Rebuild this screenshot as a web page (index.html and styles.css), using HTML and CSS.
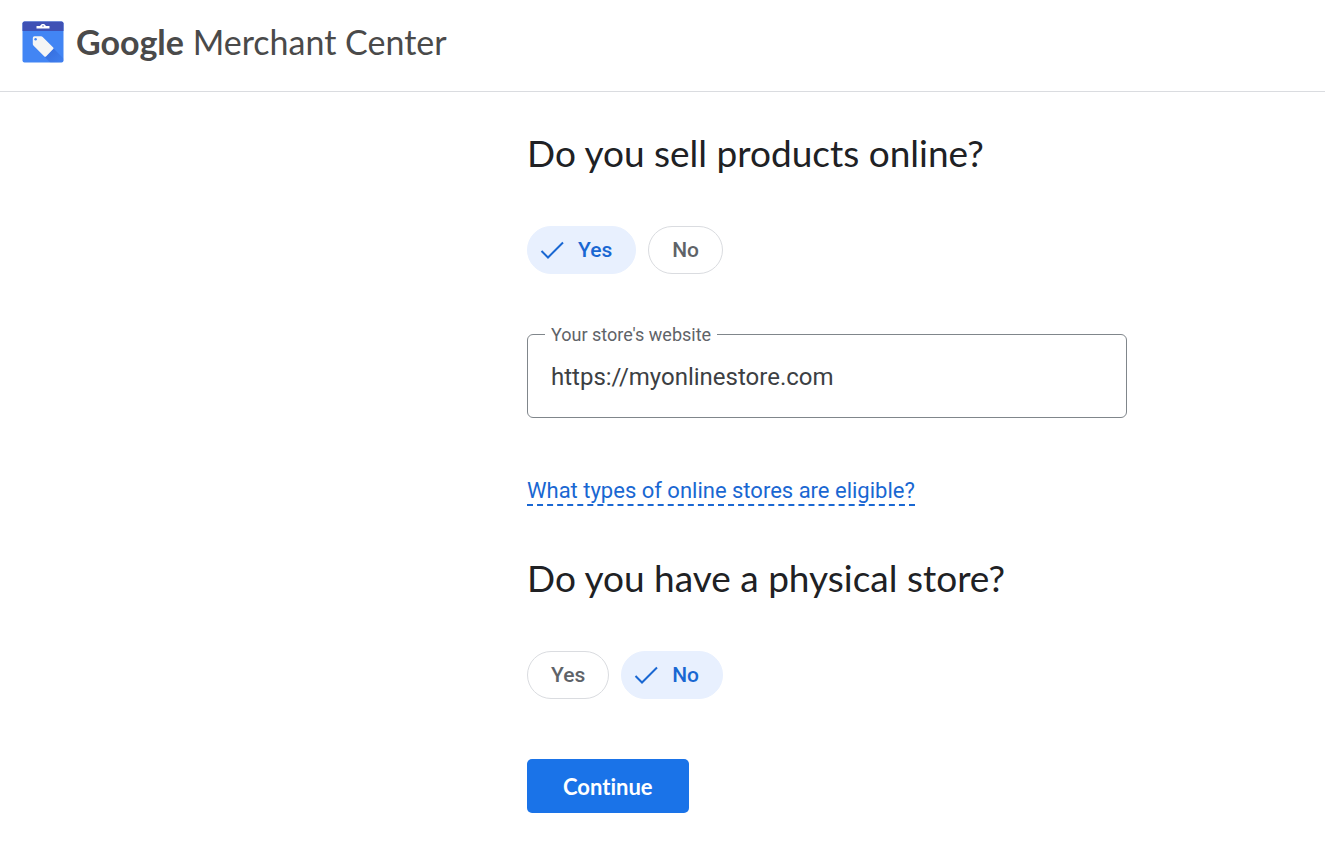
FILE: index.html
```
<!DOCTYPE html>
<html lang="en">
<head>
    <meta charset="UTF-8">
    <meta name="viewport" content="width=device-width, initial-scale=1.0">
    <title>Google Merchant Center</title>
    <link rel="stylesheet" href="styles.css">
</head>
<body>
    <header class="topbar">
        <svg class="logo" viewBox="0 0 42 42" aria-hidden="true">
            <defs>
                <clipPath id="card"><rect x="0.5" y="0.5" width="41" height="41" rx="2"/></clipPath>
                <linearGradient id="shade" x1="0" y1="0" x2="1" y2="1">
                    <stop offset="0.2" stop-color="#2a56c6" stop-opacity="0.45"/>
                    <stop offset="1" stop-color="#2a56c6" stop-opacity="0.1"/>
                </linearGradient>
            </defs>
            <g clip-path="url(#card)">
                <rect width="42" height="42" fill="#4285f4"/>
                <path fill="url(#shade)" d="M31.300 27.300 L42 38 V42 H28.700 L22.700 36 Z"/>
                <rect width="42" height="10" fill="#3f51b5"/>
                <path fill="#fff" d="M14.500 5 H17.800 C18.600 5 18.500 3 21 3 C23.500 3 23.400 5 24.200 5 H27.500 V7.500 H14.500 Z"/>
                <circle cx="21" cy="5" r="0.700" fill="#3f51b5"/>
                <path fill="#f5f5f5" d="M12.500 15.300 H19 Q20 15.300 20.700 16 L31.200 26.500 Q32 27.300 31.200 28.100 L24 35.500 Q23.200 36.200 22.400 35.500 L11.400 24.500 Q10.800 23.800 10.800 23 V17 Q10.800 15.300 12.500 15.300 Z"/>
                <circle cx="13.600" cy="18.300" r="1.200" fill="#4285f4"/>
            </g>
        </svg>
        <div class="brand"><b>Google</b> Merchant Center</div>
    </header>

    <main class="page">
        <form class="form">
            <h1 class="question" id="online">Do you sell products online?</h1>
            <div class="chips" role="radiogroup" aria-labelledby="online">
                <label class="chip">
                    <input type="radio" name="online" checked>
                    <svg class="check" viewBox="0 0 24 24" aria-hidden="true"><path d="M1.500 13 L8 19.500 L23 4.500"/></svg>
                    Yes
                </label>
                <label class="chip">
                    <input type="radio" name="online">
                    <svg class="check" viewBox="0 0 24 24" aria-hidden="true"><path d="M1.500 13 L8 19.500 L23 4.500"/></svg>
                    No
                </label>
            </div>

            <div class="field">
                <label for="website">Your store's website</label>
                <input type="text" id="website" value="https://myonlinestore.com">
            </div>

            <a class="help" href="#">What types of online stores are eligible?</a>

            <h1 class="question" id="physical">Do you have a physical store?</h1>
            <div class="chips" role="radiogroup" aria-labelledby="physical">
                <label class="chip">
                    <input type="radio" name="physical">
                    <svg class="check" viewBox="0 0 24 24" aria-hidden="true"><path d="M1.500 13 L8 19.500 L23 4.500"/></svg>
                    Yes
                </label>
                <label class="chip">
                    <input type="radio" name="physical" checked>
                    <svg class="check" viewBox="0 0 24 24" aria-hidden="true"><path d="M1.500 13 L8 19.500 L23 4.500"/></svg>
                    No
                </label>
            </div>

            <button class="continue" type="button">Continue</button>
        </form>
    </main>
</body>
</html>
```

FILE: styles.css
```
* {
    box-sizing: border-box;
}

body {
    margin: 0;
    background: #fff;
    color: #202124;
    font-family: Roboto, "Liberation Sans", sans-serif;
}

.topbar {
    display: flex;
    align-items: center;
    gap: 12px;
    padding: 20px 22px 27px;
    border-bottom: 1px solid #dadce0;
}

.logo {
    width: 42px;
    height: 42px;
}

.brand {
    font-family: Lato, sans-serif;
    font-size: 34px;
    line-height: 44px;
    color: #4a4a4a;
}

/* the form sits right of centre */
.page {
    display: grid;
    grid-template-columns: minmax(16px, 527fr) minmax(auto, 600px) minmax(16px, 198fr);
    padding: 39px 0 30px;
}

.form {
    grid-column: 2;
    display: flex;
    flex-direction: column;
    align-items: flex-start;
}

.question {
    margin: 0 0 51px;
    font-family: Lato, sans-serif;
    font-size: 37px;
    font-weight: 400;
    line-height: 44px;
}

.chips {
    display: flex;
    gap: 12px;
    margin-bottom: 60px;
}

.chip {
    display: flex;
    align-items: center;
    gap: 14px;
    height: 48px;
    padding: 0 23px;
    border: 1px solid #dadce0;
    border-radius: 24px;
    color: #5f6368;
    font-size: 21px;
    font-weight: 500;
    cursor: pointer;
}

.chip input {
    position: absolute;
    opacity: 0;
    pointer-events: none;
}

.check {
    display: none;
    width: 24px;
    height: 24px;
    fill: none;
    stroke: #1967d2;
    stroke-width: 2;
}

.chip:has(input:checked) {
    padding-left: 12px;
    border-color: #e8f0fe;
    background: #e8f0fe;
    color: #1967d2;
}

.chip:has(input:checked) .check {
    display: block;
}

.field {
    position: relative;
    width: 100%;
    margin-bottom: 60px;
}

/* label cuts a notch into the top border */
.field label {
    position: absolute;
    top: -12px;
    left: 18px;
    padding: 0 6px;
    background: #fff;
    color: #5f6368;
    font-size: 18px;
    line-height: 26px;
}

.field input {
    display: block;
    width: 100%;
    height: 84px;
    padding: 2px 23px 0;
    border: 1px solid #80868b;
    border-radius: 6px;
    background: #fff;
    color: #3c4043;
    font-family: inherit;
    font-size: 24px;
}

.help {
    margin-bottom: 50px;
    border-bottom: 2px dashed #1967d2;
    color: #1967d2;
    font-size: 22px;
    line-height: 26px;
    text-decoration: none;
}

.continue {
    height: 54px;
    padding: 0 36px;
    border: none;
    border-radius: 5px;
    background: #1a73e8;
    color: #fff;
    font-family: Lato, sans-serif;
    font-size: 22px;
    font-weight: 700;
    font-variant-ligatures: none;
    cursor: pointer;
}
```
